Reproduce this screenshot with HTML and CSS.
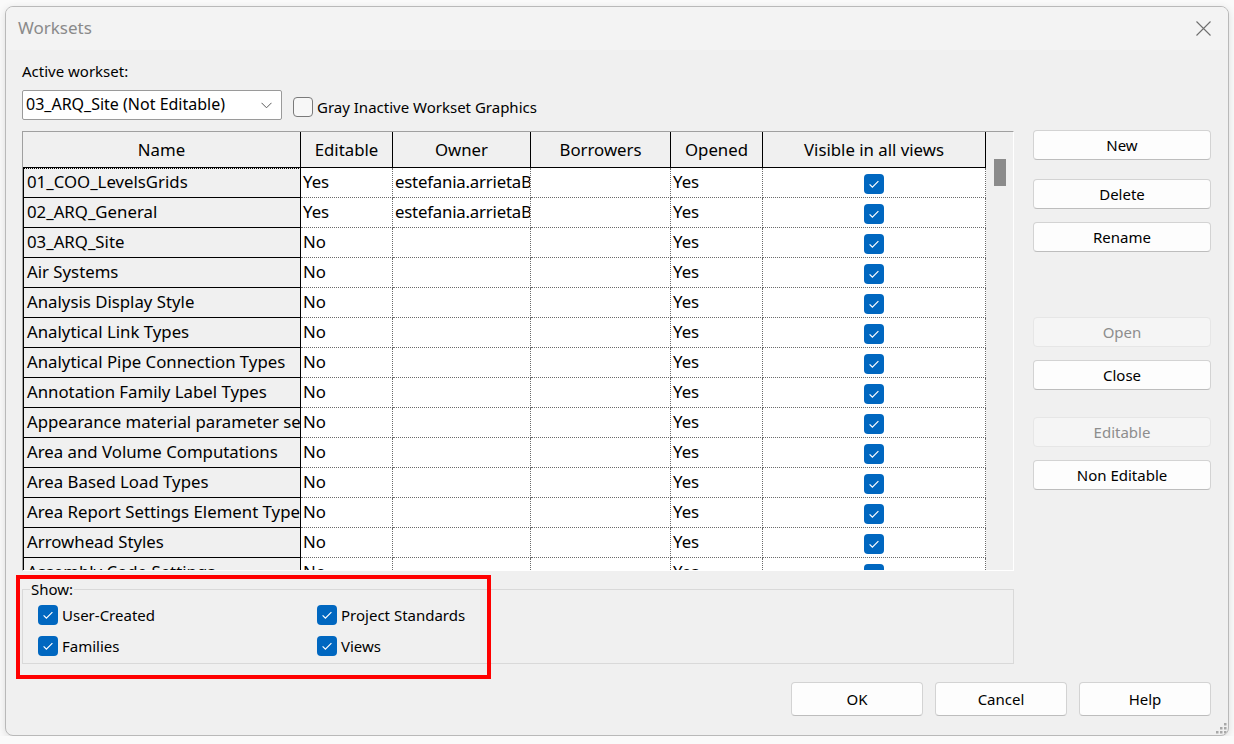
FILE: index.html
```html
<!DOCTYPE html>
<html lang="en">
<head>
    <meta charset="UTF-8">
    <title>Worksets</title>
    <link rel="stylesheet" href="styles.css">
</head>
<body>
    <div class="dialog">
        <div class="titlebar">
            <span class="title">Worksets</span>
            <svg class="close" width="15" height="15" viewBox="0 0 15 15">
                <path d="M0.5 0.5 L14.5 14.5 M14.5 0.5 L0.5 14.5" stroke="#6f6f6f" stroke-width="1.1" fill="none"/>
            </svg>
        </div>

        <div class="content">
            <div class="active-label">Active workset:</div>
            <div class="active-row">
                <div class="combo">
                    <span>03_ARQ_Site (Not Editable)</span>
                    <svg width="11" height="7" viewBox="0 0 11 7"><path d="M0.5 0.8 L5.5 5.8 L10.5 0.8" stroke="#5a5a5a" stroke-width="1" fill="none"/></svg>
                </div>
                <label class="check">
                    <span class="cb"></span>Gray Inactive Workset Graphics
                </label>
            </div>

            <div class="main">
                <div class="left">
                    <div class="grid-frame">
                        <div class="grid-body">
                            <table class="ws">
                                <thead>
                                    <tr>
                                        <th class="c-name">Name</th>
                                        <th class="c-edit">Editable</th>
                                        <th class="c-owner">Owner</th>
                                        <th class="c-borrow">Borrowers</th>
                                        <th class="c-open">Opened</th>
                                        <th class="c-vis">Visible in all views</th>
                                    </tr>
                                </thead>
                                <tbody>
                                    <tr><td class="name focus">01_COO_LevelsGrids</td><td>Yes</td><td class="owner">estefania.arrietaB</td><td></td><td>Yes</td><td class="vis"><span class="cb on"><svg viewBox="0 0 20 20"><path d="M5.6 10.4 L8.4 13.2 L14.4 7.2"/></svg></span></td></tr>
                                    <tr><td class="name">02_ARQ_General</td><td>Yes</td><td class="owner">estefania.arrietaB</td><td></td><td>Yes</td><td class="vis"><span class="cb on"><svg viewBox="0 0 20 20"><path d="M5.6 10.4 L8.4 13.2 L14.4 7.2"/></svg></span></td></tr>
                                    <tr><td class="name">03_ARQ_Site</td><td>No</td><td></td><td></td><td>Yes</td><td class="vis"><span class="cb on"><svg viewBox="0 0 20 20"><path d="M5.6 10.4 L8.4 13.2 L14.4 7.2"/></svg></span></td></tr>
                                    <tr><td class="name">Air Systems</td><td>No</td><td></td><td></td><td>Yes</td><td class="vis"><span class="cb on"><svg viewBox="0 0 20 20"><path d="M5.6 10.4 L8.4 13.2 L14.4 7.2"/></svg></span></td></tr>
                                    <tr><td class="name">Analysis Display Style</td><td>No</td><td></td><td></td><td>Yes</td><td class="vis"><span class="cb on"><svg viewBox="0 0 20 20"><path d="M5.6 10.4 L8.4 13.2 L14.4 7.2"/></svg></span></td></tr>
                                    <tr><td class="name">Analytical Link Types</td><td>No</td><td></td><td></td><td>Yes</td><td class="vis"><span class="cb on"><svg viewBox="0 0 20 20"><path d="M5.6 10.4 L8.4 13.2 L14.4 7.2"/></svg></span></td></tr>
                                    <tr><td class="name">Analytical Pipe Connection Types</td><td>No</td><td></td><td></td><td>Yes</td><td class="vis"><span class="cb on"><svg viewBox="0 0 20 20"><path d="M5.6 10.4 L8.4 13.2 L14.4 7.2"/></svg></span></td></tr>
                                    <tr><td class="name">Annotation Family Label Types</td><td>No</td><td></td><td></td><td>Yes</td><td class="vis"><span class="cb on"><svg viewBox="0 0 20 20"><path d="M5.6 10.4 L8.4 13.2 L14.4 7.2"/></svg></span></td></tr>
                                    <tr><td class="name">Appearance material parameter sets</td><td>No</td><td></td><td></td><td>Yes</td><td class="vis"><span class="cb on"><svg viewBox="0 0 20 20"><path d="M5.6 10.4 L8.4 13.2 L14.4 7.2"/></svg></span></td></tr>
                                    <tr><td class="name">Area and Volume Computations</td><td>No</td><td></td><td></td><td>Yes</td><td class="vis"><span class="cb on"><svg viewBox="0 0 20 20"><path d="M5.6 10.4 L8.4 13.2 L14.4 7.2"/></svg></span></td></tr>
                                    <tr><td class="name">Area Based Load Types</td><td>No</td><td></td><td></td><td>Yes</td><td class="vis"><span class="cb on"><svg viewBox="0 0 20 20"><path d="M5.6 10.4 L8.4 13.2 L14.4 7.2"/></svg></span></td></tr>
                                    <tr><td class="name">Area Report Settings Element Types</td><td>No</td><td></td><td></td><td>Yes</td><td class="vis"><span class="cb on"><svg viewBox="0 0 20 20"><path d="M5.6 10.4 L8.4 13.2 L14.4 7.2"/></svg></span></td></tr>
                                    <tr><td class="name">Arrowhead Styles</td><td>No</td><td></td><td></td><td>Yes</td><td class="vis"><span class="cb on"><svg viewBox="0 0 20 20"><path d="M5.6 10.4 L8.4 13.2 L14.4 7.2"/></svg></span></td></tr>
                                    <tr><td class="name">Assembly Code Settings</td><td>No</td><td></td><td></td><td>Yes</td><td class="vis"><span class="cb on"><svg viewBox="0 0 20 20"><path d="M5.6 10.4 L8.4 13.2 L14.4 7.2"/></svg></span></td></tr>
                                </tbody>
                            </table>
                        </div>
                        <div class="vscroll"><div class="thumb"></div></div>
                    </div>

                    <fieldset class="show">
                        <legend>Show:</legend>
                        <div class="show-grid">
                            <label class="opt"><span class="cb on"><svg viewBox="0 0 20 20"><path d="M5.6 10.4 L8.4 13.2 L14.4 7.2"/></svg></span>User-Created</label>
                            <label class="opt"><span class="cb on"><svg viewBox="0 0 20 20"><path d="M5.6 10.4 L8.4 13.2 L14.4 7.2"/></svg></span>Project Standards</label>
                            <label class="opt"><span class="cb on"><svg viewBox="0 0 20 20"><path d="M5.6 10.4 L8.4 13.2 L14.4 7.2"/></svg></span>Families</label>
                            <label class="opt"><span class="cb on"><svg viewBox="0 0 20 20"><path d="M5.6 10.4 L8.4 13.2 L14.4 7.2"/></svg></span>Views</label>
                        </div>
                    </fieldset>
                </div>

                <div class="side">
                    <button class="btn">New</button>
                    <button class="btn gap-sm">Delete</button>
                    <button class="btn gap-xs">Rename</button>
                    <button class="btn gap-lg" disabled>Open</button>
                    <button class="btn gap-xs">Close</button>
                    <button class="btn gap-md" disabled>Editable</button>
                    <button class="btn gap-xs">Non Editable</button>
                </div>
            </div>

            <div class="footer">
                <button class="btn wide">OK</button>
                <button class="btn wide">Cancel</button>
                <button class="btn wide">Help</button>
            </div>
        </div>

        <!-- highlight drawn over the screenshot -->
        <div class="annot"></div>

        <svg class="grip" width="12" height="12" viewBox="0 0 12 12" fill="#a8a8a8">
            <rect x="9" y="1" width="2.5" height="2.5"/>
            <rect x="5" y="5" width="2.5" height="2.5"/>
            <rect x="9" y="5" width="2.5" height="2.5"/>
            <rect x="1" y="9" width="2.5" height="2.5"/>
            <rect x="5" y="9" width="2.5" height="2.5"/>
            <rect x="9" y="9" width="2.5" height="2.5"/>
        </svg>
    </div>
</body>
</html>
```

FILE: styles.css
```css
body {
    margin: 0;
    background-color: #fafafa;
    font-family: "Noto Sans", "Open Sans", sans-serif;
    font-size: 15px;
    color: #000;
}
.dialog {
    position: relative;
    box-sizing: border-box;
    width: 1224px;
    height: 730px;
    margin: 6px 0 0 5px;
    background-color: #f0f0f0;
    border: 1px solid #b9b9b9;
    border-radius: 8px;
    box-shadow: 0 2px 8px rgba(0,0,0,0.12);
    overflow: hidden;
}
.titlebar {
    height: 43px;
    display: flex;
    align-items: center;
    justify-content: space-between;
    padding: 0 17px 0 12px;
    background-color: #f3f3f3;
}
.title {
    color: #8a8a8a;
    font-size: 17px;
    margin-top: -2px;
}
.close {
    display: block;
}
.content {
    padding: 0 17px 0 16px;
}
.active-label {
    line-height: 20px;
    margin-top: 11px;
}
.active-row {
    display: flex;
    align-items: center;
    margin-top: 9px;
    height: 30px;
}
.combo {
    box-sizing: border-box;
    width: 260px;
    height: 30px;
    display: flex;
    align-items: center;
    justify-content: space-between;
    padding: 0 9px 0 3px;
    font-size: 16px;
    background-color: #fff;
    border: 1px solid #9a9a9a;
    border-radius: 2px;
}
.combo span {
    margin-top: -2px;
}
.check {
    display: flex;
    align-items: center;
    gap: 4px;
    margin-left: 11px;
    padding-top: 4px;
}
.cb {
    box-sizing: border-box;
    display: inline-block;
    width: 20px;
    height: 20px;
    border: 1px solid #7a7a7a;
    border-radius: 4px;
    background-color: #f7f7f7;
    flex: none;
}
.cb.on {
    border: none;
    background-color: #0067c0;
}
.cb svg {
    display: block;
    width: 20px;
    height: 20px;
    fill: none;
    stroke: #fff;
    stroke-width: 1.2;
}

/* main area */
.main {
    display: flex;
    margin-top: 10px;
}
.left {
    width: 992px;
}
.grid-frame {
    box-sizing: border-box;
    display: flex;
    height: 440px;
    margin-top: 1px;
    border: 1px solid;
    border-color: #a0a0a0 #ffffff #ffffff #a0a0a0;
    background-color: #fff;
    overflow: hidden;
}
.grid-body {
    width: 963px;
    flex: none;
    overflow: hidden;
}
.ws {
    border-collapse: separate;
    border-spacing: 0;
    table-layout: fixed;
    width: 963px;
    font-size: 16.8px;
}
.ws th,
.ws td {
    box-sizing: border-box;
    padding: 0 2px 2px 2px;
    white-space: nowrap;
    overflow: hidden;
    text-overflow: clip;
    font-weight: normal;
}
.ws thead tr {
    height: 36px;
}
.ws th {
    padding: 0 2px;
    background-color: #f0f0f0;
    text-align: center;
    border-right: 1px solid #000;
    border-bottom: 1px solid #000;
}
.ws tbody tr {
    height: 30px;
}
.ws td {
    text-align: left;
    background-color: #fff;
    border-right: 1px dotted #6b6b6b;
    border-bottom: 1px dotted #6b6b6b;
}
.ws td.name {
    padding-left: 3px;
    background-color: #f0f0f0;
    border-left: 1px solid #000;
    border-right: 1px solid #000;
    border-bottom: 1px solid #000;
}
.ws td.owner {
    letter-spacing: -0.2px;
}
.ws td.focus {
    outline: 1px dotted #000;
    outline-offset: -1px;
}
.ws td.vis {
    text-align: center;
    padding: 0;
}
.ws td.vis .cb {
    vertical-align: middle;
}
.c-name { width: 278px; }
.c-edit { width: 92px; }
.c-owner { width: 138px; }
.c-borrow { width: 140px; }
.c-open { width: 92px; }
.c-vis { width: 223px; }

.vscroll {
    flex: 1;
    background-color: #f0f0f0;
    padding: 27px 0 0 8px;
}
.thumb {
    width: 12px;
    height: 27px;
    background-color: #8b8b8b;
}

/* show group */
.show {
    margin: 8px 0 0 0;
    padding: 0 0 7px 0;
    border: 1px solid #d9d9d9;
    min-width: 0;
}
.show legend {
    margin-left: 7px;
    padding: 0 1px;
    line-height: 20px;
}
.show-grid {
    display: grid;
    grid-template-columns: 279px auto;
    row-gap: 11px;
    padding: 6px 0 0 15px;
}
.opt {
    display: flex;
    align-items: center;
    gap: 4px;
    height: 20px;
}

/* buttons */
.side {
    width: 178px;
    margin-left: 19px;
    display: flex;
    flex-direction: column;
}
.btn {
    box-sizing: border-box;
    height: 30px;
    font-family: inherit;
    font-size: 15px;
    color: #000;
    background-color: #fdfdfd;
    border: 1px solid #d3d3d3;
    border-bottom-color: #bdbdbd;
    border-radius: 4px;
    padding: 0;
}
.btn:disabled {
    background-color: #f5f5f5;
    border-color: #e6e6e6;
    color: #8d8d8d;
}
.gap-xs { margin-top: 13px; }
.gap-sm { margin-top: 19px; }
.gap-md { margin-top: 27px; }
.gap-lg { margin-top: 65px; }

.footer {
    display: flex;
    justify-content: flex-end;
    gap: 12px;
    margin-top: 18px;
}
.btn.wide {
    width: 132px;
    height: 34px;
}

.annot {
    position: absolute;
    left: 10px;
    top: 568px;
    width: 475px;
    height: 104px;
    box-sizing: border-box;
    border: 4px solid #ff0000;
}
.grip {
    position: absolute;
    right: 1px;
    bottom: 1px;
}
```
